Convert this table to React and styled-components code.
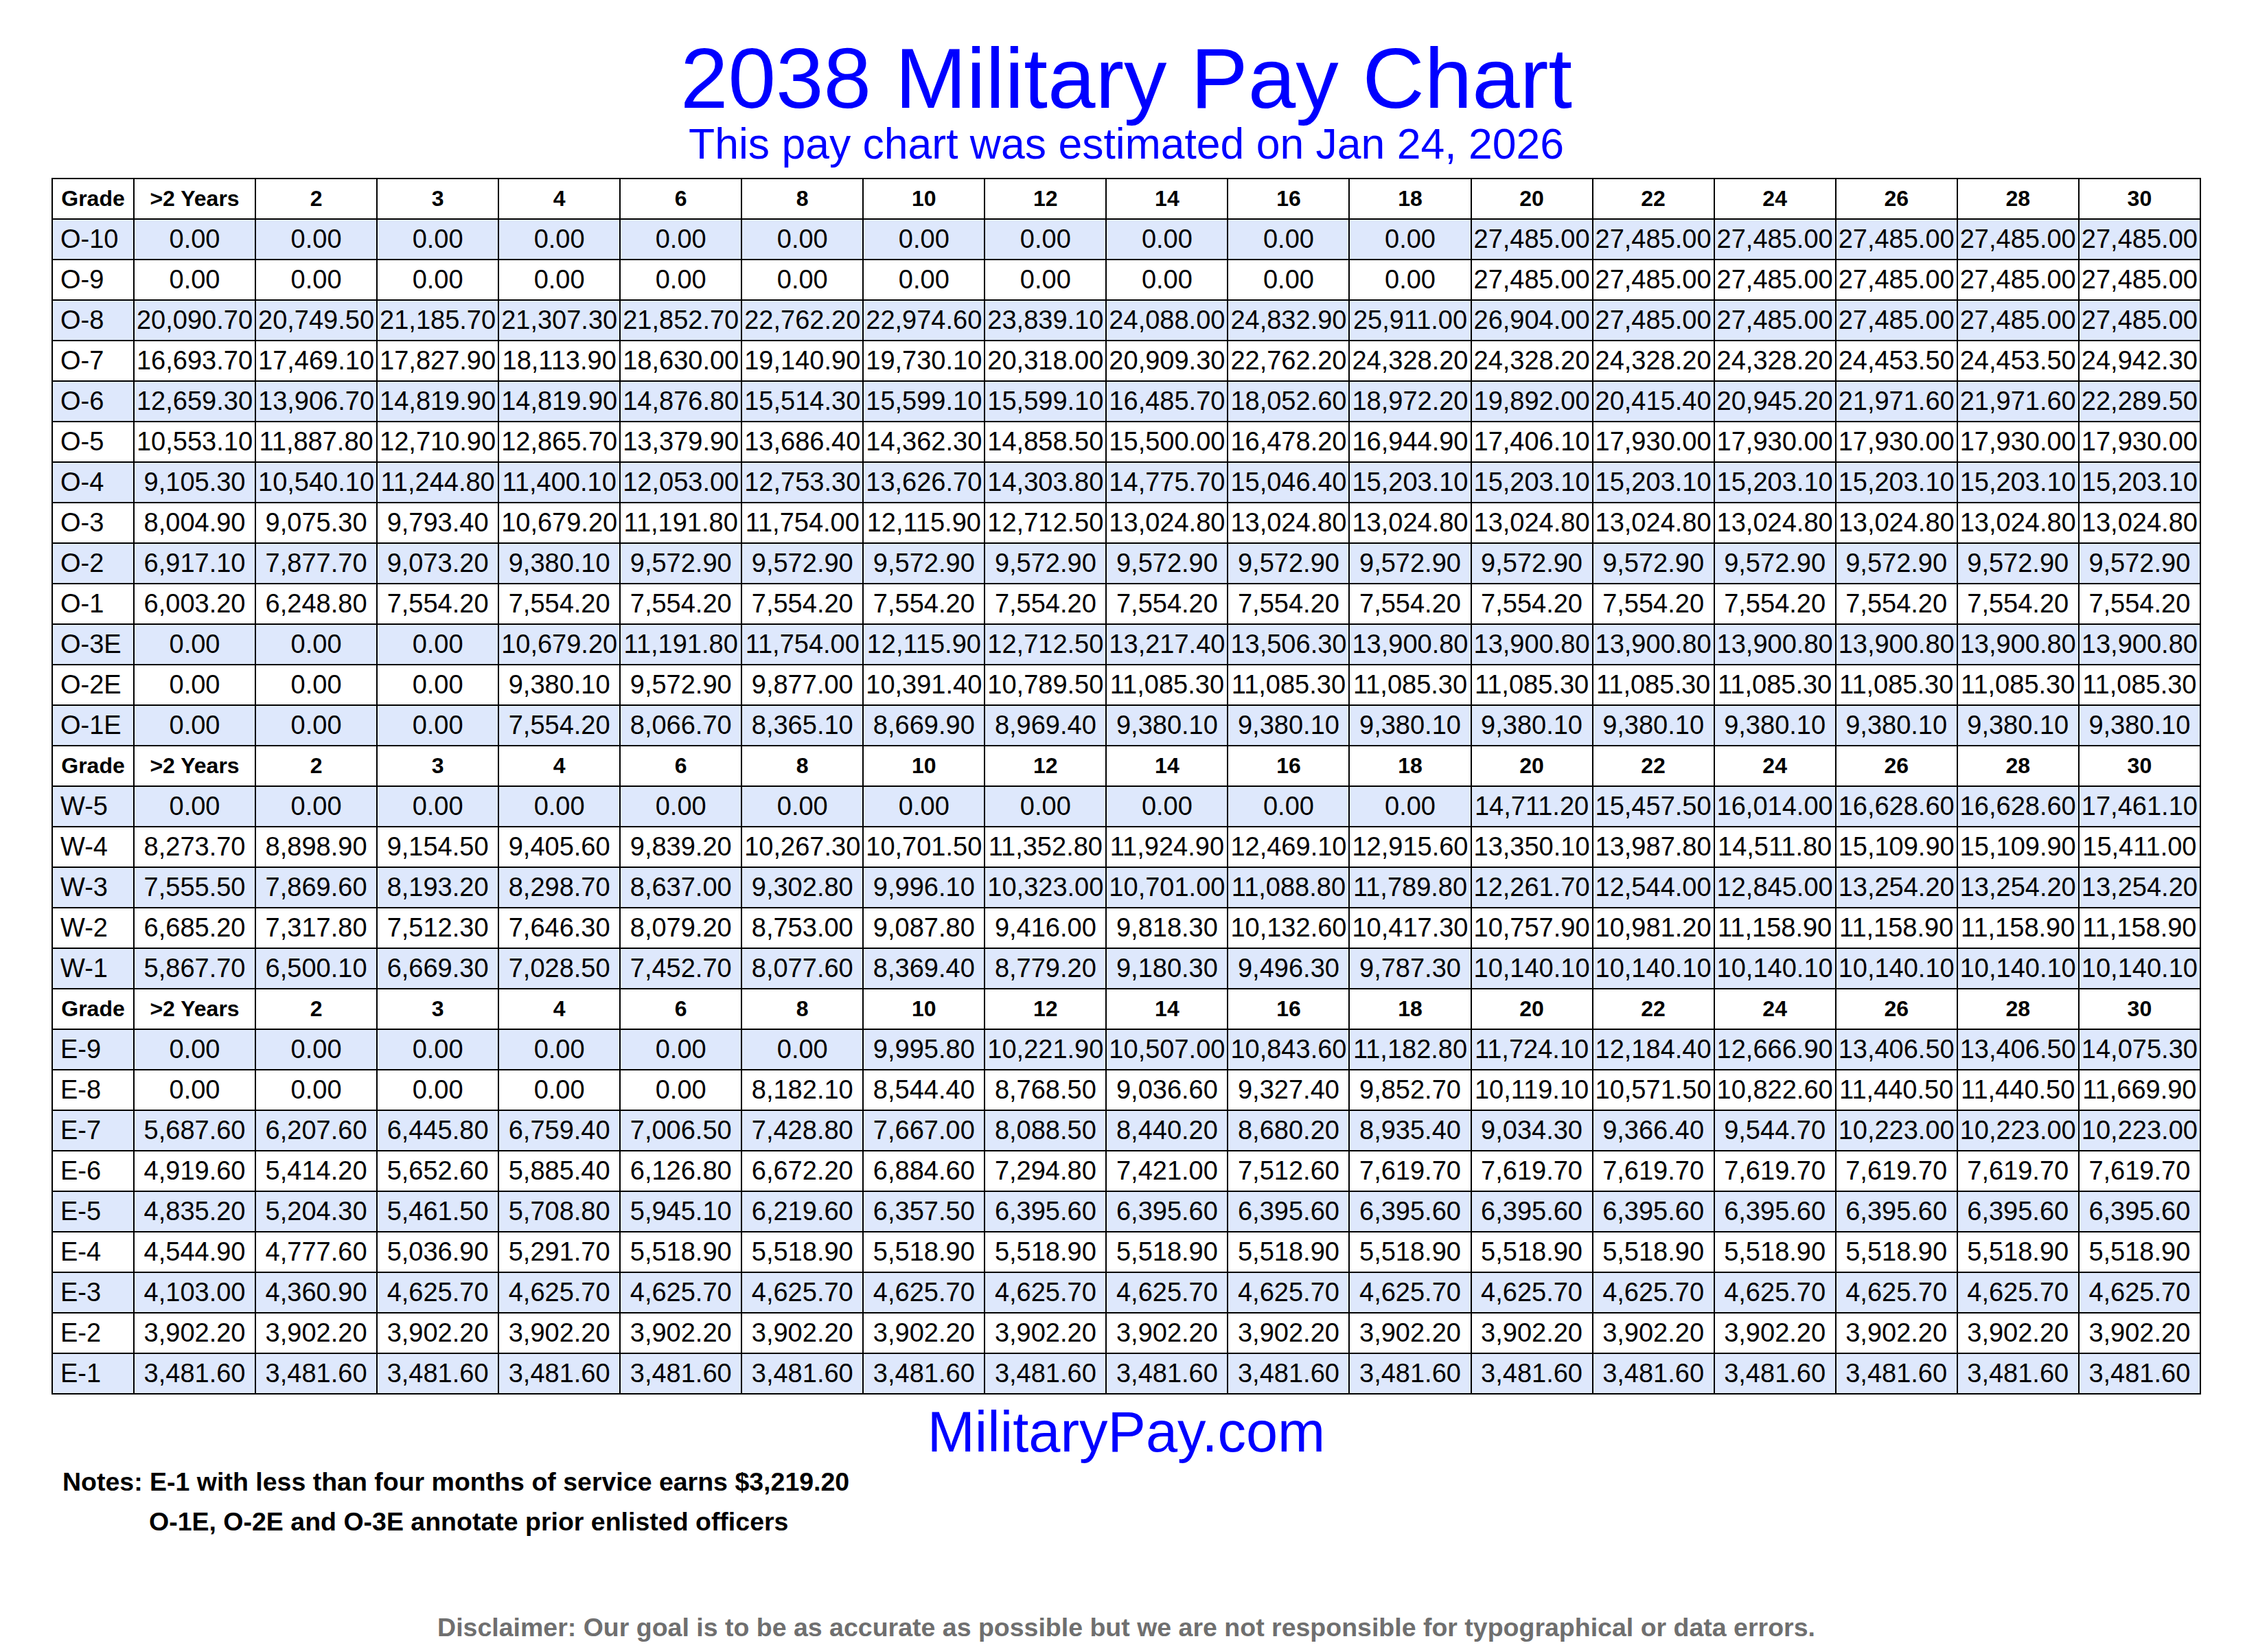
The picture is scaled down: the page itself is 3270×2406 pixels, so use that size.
import React from "react"
import styled, { createGlobalStyle } from "styled-components"

const GlobalStyle = createGlobalStyle`
	html, body {
		margin: 0;
		padding: 0;
		background: #fff;
	}
	body {
		font-family: "Liberation Sans", Arial, sans-serif;
		color: #000;
	}
`

const Page = styled.div`
	width: 3131px;
	margin-left: 75px;
	display: flex;
	flex-direction: column;
`

const Title = styled.h1`
	margin: 51px 0 0;
	font-size: 125px;
	line-height: 125px;
	font-weight: 400;
	color: #0000ff;
	text-align: center;
`

const Subtitle = styled.h2`
	margin: 2px 0 0;
	font-size: 62.5px;
	line-height: 63px;
	font-weight: 400;
	color: #0000ff;
	text-align: center;
`

const Table = styled.table`
	margin-top: 18px;
	width: 3131px;
	table-layout: fixed;
	border-collapse: collapse;
	border: 2px solid #000;
`

const Row = styled.tr`
	height: 59px;
	background: ${props => (props.$shaded ? "#dee8fc" : "#fff")};
`

const HeadCell = styled.th`
	border: 2px solid #000;
	padding: 0;
	font-size: 32px;
	font-weight: 700;
	text-align: center;
	white-space: nowrap;
`

const GradeCell = styled.td`
	border: 2px solid #000;
	padding: 0 0 0 11px;
	font-size: 38px;
	text-align: left;
	white-space: nowrap;
`

const PayCell = styled.td`
	border: 2px solid #000;
	padding: 0;
	font-size: 38px;
	text-align: center;
	white-space: nowrap;
`

const SiteName = styled.div`
	margin-top: 13px;
	font-size: 83px;
	line-height: 83px;
	color: #0000ff;
	text-align: center;
`

const Notes = styled.div`
	margin-top: 2px;
	padding-left: 16px;
	display: flex;
	flex-direction: column;
`

const NoteLine = styled.div`
	font-size: 37.5px;
	line-height: 58px;
	font-weight: 700;
	padding-left: ${props => (props.$indent ? "126px" : "0")};
`

const Disclaimer = styled.div`
	margin-top: 96px;
	font-size: 37.5px;
	line-height: 58px;
	font-weight: 700;
	color: #6f6f6f;
	text-align: center;
`

const YEARS = [">2 Years", "2", "3", "4", "6", "8", "10", "12", "14", "16", "18", "20", "22", "24", "26", "28", "30"]

const rep = (v, n) => Array(n).fill(v)

const SECTIONS = [
	[
		["O-10", [...rep("0.00", 11), ...rep("27,485.00", 6)]],
		["O-9", [...rep("0.00", 11), ...rep("27,485.00", 6)]],
		["O-8", ["20,090.70", "20,749.50", "21,185.70", "21,307.30", "21,852.70", "22,762.20", "22,974.60", "23,839.10", "24,088.00", "24,832.90", "25,911.00", "26,904.00", ...rep("27,485.00", 5)]],
		["O-7", ["16,693.70", "17,469.10", "17,827.90", "18,113.90", "18,630.00", "19,140.90", "19,730.10", "20,318.00", "20,909.30", "22,762.20", "24,328.20", "24,328.20", "24,328.20", "24,328.20", "24,453.50", "24,453.50", "24,942.30"]],
		["O-6", ["12,659.30", "13,906.70", "14,819.90", "14,819.90", "14,876.80", "15,514.30", "15,599.10", "15,599.10", "16,485.70", "18,052.60", "18,972.20", "19,892.00", "20,415.40", "20,945.20", "21,971.60", "21,971.60", "22,289.50"]],
		["O-5", ["10,553.10", "11,887.80", "12,710.90", "12,865.70", "13,379.90", "13,686.40", "14,362.30", "14,858.50", "15,500.00", "16,478.20", "16,944.90", "17,406.10", ...rep("17,930.00", 5)]],
		["O-4", ["9,105.30", "10,540.10", "11,244.80", "11,400.10", "12,053.00", "12,753.30", "13,626.70", "14,303.80", "14,775.70", "15,046.40", ...rep("15,203.10", 7)]],
		["O-3", ["8,004.90", "9,075.30", "9,793.40", "10,679.20", "11,191.80", "11,754.00", "12,115.90", "12,712.50", ...rep("13,024.80", 9)]],
		["O-2", ["6,917.10", "7,877.70", "9,073.20", "9,380.10", ...rep("9,572.90", 13)]],
		["O-1", ["6,003.20", "6,248.80", ...rep("7,554.20", 15)]],
		["O-3E", [...rep("0.00", 3), "10,679.20", "11,191.80", "11,754.00", "12,115.90", "12,712.50", "13,217.40", "13,506.30", ...rep("13,900.80", 7)]],
		["O-2E", [...rep("0.00", 3), "9,380.10", "9,572.90", "9,877.00", "10,391.40", "10,789.50", ...rep("11,085.30", 9)]],
		["O-1E", [...rep("0.00", 3), "7,554.20", "8,066.70", "8,365.10", "8,669.90", "8,969.40", ...rep("9,380.10", 9)]],
	],
	[
		["W-5", [...rep("0.00", 11), "14,711.20", "15,457.50", "16,014.00", "16,628.60", "16,628.60", "17,461.10"]],
		["W-4", ["8,273.70", "8,898.90", "9,154.50", "9,405.60", "9,839.20", "10,267.30", "10,701.50", "11,352.80", "11,924.90", "12,469.10", "12,915.60", "13,350.10", "13,987.80", "14,511.80", "15,109.90", "15,109.90", "15,411.00"]],
		["W-3", ["7,555.50", "7,869.60", "8,193.20", "8,298.70", "8,637.00", "9,302.80", "9,996.10", "10,323.00", "10,701.00", "11,088.80", "11,789.80", "12,261.70", "12,544.00", "12,845.00", "13,254.20", "13,254.20", "13,254.20"]],
		["W-2", ["6,685.20", "7,317.80", "7,512.30", "7,646.30", "8,079.20", "8,753.00", "9,087.80", "9,416.00", "9,818.30", "10,132.60", "10,417.30", "10,757.90", "10,981.20", ...rep("11,158.90", 4)]],
		["W-1", ["5,867.70", "6,500.10", "6,669.30", "7,028.50", "7,452.70", "8,077.60", "8,369.40", "8,779.20", "9,180.30", "9,496.30", "9,787.30", ...rep("10,140.10", 6)]],
	],
	[
		["E-9", [...rep("0.00", 6), "9,995.80", "10,221.90", "10,507.00", "10,843.60", "11,182.80", "11,724.10", "12,184.40", "12,666.90", "13,406.50", "13,406.50", "14,075.30"]],
		["E-8", [...rep("0.00", 5), "8,182.10", "8,544.40", "8,768.50", "9,036.60", "9,327.40", "9,852.70", "10,119.10", "10,571.50", "10,822.60", "11,440.50", "11,440.50", "11,669.90"]],
		["E-7", ["5,687.60", "6,207.60", "6,445.80", "6,759.40", "7,006.50", "7,428.80", "7,667.00", "8,088.50", "8,440.20", "8,680.20", "8,935.40", "9,034.30", "9,366.40", "9,544.70", ...rep("10,223.00", 3)]],
		["E-6", ["4,919.60", "5,414.20", "5,652.60", "5,885.40", "6,126.80", "6,672.20", "6,884.60", "7,294.80", "7,421.00", "7,512.60", ...rep("7,619.70", 7)]],
		["E-5", ["4,835.20", "5,204.30", "5,461.50", "5,708.80", "5,945.10", "6,219.60", "6,357.50", ...rep("6,395.60", 10)]],
		["E-4", ["4,544.90", "4,777.60", "5,036.90", "5,291.70", ...rep("5,518.90", 13)]],
		["E-3", ["4,103.00", "4,360.90", ...rep("4,625.70", 15)]],
		["E-2", rep("3,902.20", 17)],
		["E-1", rep("3,481.60", 17)],
	],
]

const HeaderRow = () => (
	<Row>
		<HeadCell>Grade</HeadCell>
		{YEARS.map(y => (
			<HeadCell key={y}>{y}</HeadCell>
		))}
	</Row>
)

const App = () => (
	<>
		<GlobalStyle />
		<Page>
			<Title>2038 Military Pay Chart</Title>
			<Subtitle>This pay chart was estimated on Jan 24, 2026</Subtitle>
			<Table>
				<colgroup>
					<col style={{ width: "119px" }} />
					{YEARS.map(y => (
						<col key={y} />
					))}
				</colgroup>
				<tbody>
					{SECTIONS.map((rows, s) => (
						<React.Fragment key={s}>
							<HeaderRow />
							{rows.map(([grade, pay], i) => (
								<Row key={grade} $shaded={i % 2 === 0}>
									<GradeCell>{grade}</GradeCell>
									{pay.map((v, j) => (
										<PayCell key={j}>{v}</PayCell>
									))}
								</Row>
							))}
						</React.Fragment>
					))}
				</tbody>
			</Table>
			<SiteName>MilitaryPay.com</SiteName>
			<Notes>
				<NoteLine>Notes: E-1 with less than four months of service earns $3,219.20</NoteLine>
				<NoteLine $indent>O-1E, O-2E and O-3E annotate prior enlisted officers</NoteLine>
			</Notes>
			<Disclaimer>
				Disclaimer: Our goal is to be as accurate as possible but we are not responsible for typographical or data errors.
			</Disclaimer>
		</Page>
	</>
)

export default App
